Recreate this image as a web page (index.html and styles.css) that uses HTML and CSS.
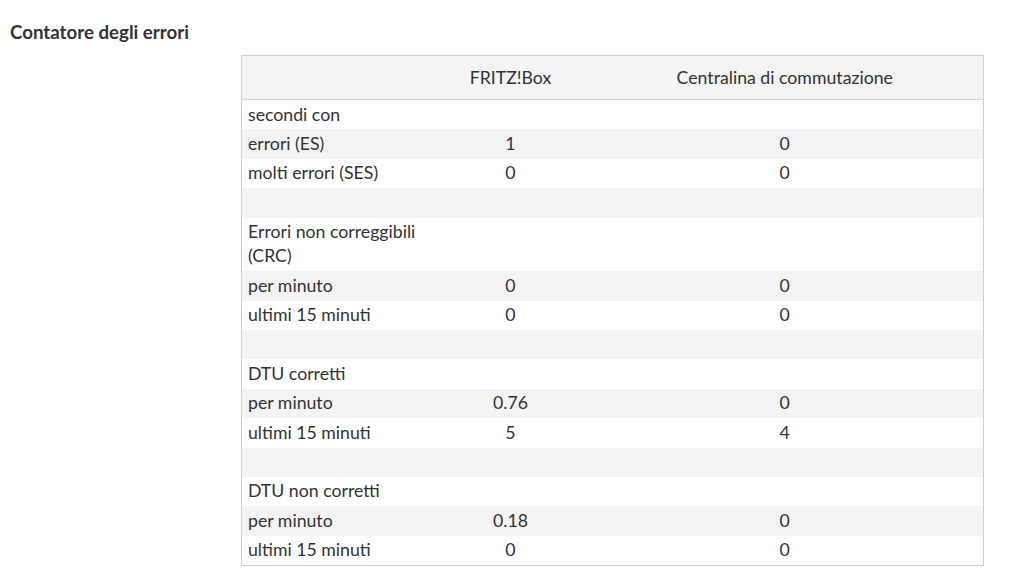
FILE: index.html
```html
<!DOCTYPE html>
<html lang="it">
<head>
<meta charset="utf-8">
<title>Contatore degli errori</title>
<link rel="stylesheet" href="styles.css">
</head>
<body>
<h2 class="title">Contatore degli errori</h2>
<div class="content">
  <table class="stats">
    <colgroup>
      <col class="c1"><col class="c2"><col class="c3">
    </colgroup>
    <thead>
      <tr><th></th><th>FRITZ!Box</th><th>Centralina di commutazione</th></tr>
    </thead>
    <tbody>
      <tr><td>secondi con</td><td></td><td></td></tr>
      <tr><td>errori (ES)</td><td>1</td><td>0</td></tr>
      <tr><td>molti errori (SES)</td><td>0</td><td>0</td></tr>
      <tr><td>&nbsp;</td><td></td><td></td></tr>
      <tr><td>Errori non correggibili (CRC)</td><td></td><td></td></tr>
      <tr><td>per minuto</td><td>0</td><td>0</td></tr>
      <tr><td>ultimi 15 minuti</td><td>0</td><td>0</td></tr>
      <tr><td>&nbsp;</td><td></td><td></td></tr>
      <tr><td>DTU corretti</td><td></td><td></td></tr>
      <tr><td>per minuto</td><td>0.76</td><td>0</td></tr>
      <tr><td>ultimi 15 minuti</td><td>5</td><td>4</td></tr>
      <tr><td>&nbsp;</td><td></td><td></td></tr>
      <tr><td>DTU non corretti</td><td></td><td></td></tr>
      <tr><td>per minuto</td><td>0.18</td><td>0</td></tr>
      <tr><td>ultimi 15 minuti</td><td>0</td><td>0</td></tr>
    </tbody>
  </table>
</div>
</body>
</html>
```
FILE: styles.css
```css
html, body {
  margin: 0;
  padding: 0;
  background: #ffffff;
}
body {
  font-family: "Lato", "Open Sans", sans-serif;
  color: #333333;
  font-size: 17.7px;
}
.title {
  margin: 0;
  padding: 20px 0 0 10px;
  font-size: 18.7px;
  font-weight: 700;
  line-height: 24px;
  color: #333333;
}
.content {
  padding: 11px 0 0 241px;
  width: 743px;
}
.stats {
  width: 743px;
  border-collapse: collapse;
  border: 1px solid #cfcfcf;
  table-layout: fixed;
}
.c1 { width: 193px; }
.c2 { width: 152px; }
.c3 { width: auto; }
.stats th {
  background: #f4f4f4;
  font-weight: 400;
  height: 43px;
  padding: 0 6px;
  border-bottom: 1px solid #d6d6d6;
  line-height: 24px;
  text-align: center;
}
.stats td {
  padding: 2.6px 6px;
  line-height: 24.2px;
  vertical-align: top;
}
.stats td + td {
  text-align: center;
}
.stats tbody tr:nth-child(even) td {
  background: #f4f4f4;
}
```
